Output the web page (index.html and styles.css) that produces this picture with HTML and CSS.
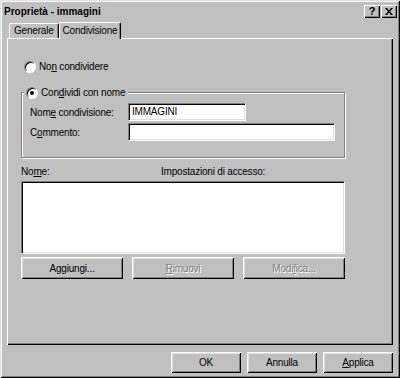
FILE: index.html
```html
<!DOCTYPE html>
<html lang="it">
<head>
    <meta charset="UTF-8">
    <title>Proprietà - immagini</title>
    <link rel="stylesheet" href="styles.css">
</head>
<body>

    <div class="dialog">
        <!-- Barra del titolo -->
        <div class="titlebar">
            <span class="title">Proprietà - immagini</span>
            <div class="caption-buttons">
                <div class="cap-btn help">?</div>
                <div class="cap-btn">
                    <svg width="8" height="7" viewBox="0 0 8 7">
                        <path d="M0 0h2l2 2.5L6 0h2L5 3.5 8 7H6L4 4.5 2 7H0l3-3.5z" fill="#000"/>
                    </svg>
                </div>
            </div>
        </div>

        <!-- Schede -->
        <div class="tabs">
            <div class="tab">Generale</div>
            <div class="tab active">Condivisione</div>
        </div>

        <div class="panel">
            <div class="radio-row first">
                <span class="radio"></span>
                <span>No<u>n</u> condividere</span>
            </div>

            <div class="group">
                <div class="radio-row legend">
                    <span class="radio checked"></span>
                    <span>Con<u>d</u>ividi con nome</span>
                </div>
                <div class="field-row">
                    <span class="field-label">Nom<u>e</u> condivisione:</span>
                    <div class="textbox short">IMMAGINI</div>
                </div>
                <div class="field-row">
                    <span class="field-label">C<u>o</u>mmento:</span>
                    <div class="textbox long"></div>
                </div>
            </div>

            <div class="list-header">
                <span>No<u>m</u>e:</span>
                <span>Impostazioni di accesso:</span>
            </div>
            <div class="listbox"></div>

            <div class="list-buttons">
                <div class="btn wide">A<u>g</u>giungi...</div>
                <div class="btn wide disabled"><u>R</u>imuovi</div>
                <div class="btn wide disabled">Modi<u>f</u>ica...</div>
            </div>
        </div>

        <!-- Pulsanti finali -->
        <div class="footer">
            <div class="btn">OK</div>
            <div class="btn">Annulla</div>
            <div class="btn"><u>A</u>pplica</div>
        </div>
    </div>

</body>
</html>
```

FILE: styles.css
```css
body {
    margin: 0;
    font-family: 'Liberation Sans', Arial, sans-serif;
    font-size: 10px;
    letter-spacing: -0.2px;
    color: #000;
    background-color: #c0c0c0;
}
u {
    text-decoration-thickness: 1px;
    text-underline-offset: 1px;
}
.dialog {
    box-sizing: border-box;
    width: 400px;
    height: 378px;
    padding: 3px;
    background-color: #c0c0c0;
    box-shadow: inset 1px 1px #dfdfdf, inset -1px -1px #000,
                inset 2px 2px #fff, inset -2px -2px #808080;
}
.titlebar {
    height: 16px;
    display: flex;
    align-items: center;
    justify-content: space-between;
    padding-left: 1px;
}
.title {
    font-weight: bold;
    font-size: 10px;
    letter-spacing: 0;
}
.caption-buttons {
    display: flex;
    gap: 1px;
}
.cap-btn {
    width: 16px;
    height: 13px;
    display: flex;
    align-items: center;
    justify-content: center;
    font-weight: bold;
    font-size: 11px;
    box-shadow: inset 1px 1px #fff, inset -1px -1px #000,
                inset -2px -2px #808080;
}
.tabs {
    display: flex;
    align-items: flex-end;
    height: 16px;
    margin-top: 3px;
    padding-left: 6px;
}
.tab {
    height: 14px;
    padding: 0 4px;
    line-height: 14px;
    border-top: 1px solid #fff;
    border-left: 1px solid #fff;
    border-right: 1px solid #000;
    border-radius: 2px 2px 0 0;
    box-shadow: inset -1px 0 #808080;
}
.tab.active {
    height: 16px;
    line-height: 15px;
    padding: 0 3px;
    margin-bottom: -1px;
    background-color: #c0c0c0;
    position: relative;
    z-index: 1;
}
.panel {
    box-sizing: border-box;
    display: flex;
    flex-direction: column;
    width: 386px;
    height: 307px;
    margin-left: 4px;
    padding: 22px 48px 0 14px;
    box-shadow: inset 1px 1px #fff, inset -1px -1px #000,
                inset -2px -2px #808080;
}
.radio-row {
    display: flex;
    align-items: center;
    gap: 3px;
    height: 13px;
}
.radio-row.first {
    margin-left: 3px;
}
.radio {
    box-sizing: border-box;
    width: 12px;
    height: 12px;
    border-radius: 50%;
    background-color: #fff;
    border: 1px solid;
    border-color: #808080 #fff #fff #808080;
    box-shadow: inset 1px 1px #000;
    display: flex;
    align-items: center;
    justify-content: center;
}
.radio.checked::after {
    content: "";
    width: 4px;
    height: 4px;
    border-radius: 50%;
    background-color: #000;
}
.group {
    margin-top: 19px;
    border: 1px solid #808080;
    box-shadow: inset 1px 1px #fff, 1px 1px #fff;
    padding: 0 0 16px 8px;
}
.radio-row.legend {
    width: fit-content;
    margin: -7px 0 4px -6px;
    padding: 0 3px 0 2px;
    background-color: #c0c0c0;
}
.field-row {
    display: flex;
    align-items: center;
    margin-bottom: 2px;
}
.field-row:last-child {
    margin-bottom: 0;
}
.field-label {
    width: 98px;
}
.textbox {
    box-sizing: border-box;
    height: 18px;
    padding: 0 3px;
    line-height: 16px;
    background-color: #fff;
    border: 1px solid;
    border-color: #808080 #fff #fff #808080;
    box-shadow: inset 1px 1px #000, inset -1px -1px #dfdfdf;
}
.textbox.short {
    width: 118px;
}
.textbox.long {
    width: 207px;
}
.list-header {
    display: grid;
    grid-template-columns: 140px 1fr;
    height: 13px;
    line-height: 13px;
    margin-top: 7px;
}
.listbox {
    box-sizing: border-box;
    height: 73px;
    margin-top: 3px;
    background-color: #fff;
    border: 1px solid;
    border-color: #808080 #fff #fff #808080;
    box-shadow: inset 1px 1px #000, inset -1px -1px #dfdfdf;
}
.list-buttons {
    display: flex;
    gap: 9px;
    margin-top: 3px;
}
.btn {
    box-sizing: border-box;
    width: 70px;
    height: 21px;
    display: flex;
    align-items: center;
    justify-content: center;
    box-shadow: inset 1px 1px #fff, inset -1px -1px #000,
                inset 2px 2px #dfdfdf, inset -2px -2px #808080;
}
.btn.wide {
    width: 102px;
    height: 22px;
}
.btn.disabled {
    color: #808080;
    text-shadow: 1px 1px #fff;
}
.footer {
    display: flex;
    justify-content: flex-end;
    gap: 6px;
    margin-top: 7px;
    padding-right: 4px;
}
```
